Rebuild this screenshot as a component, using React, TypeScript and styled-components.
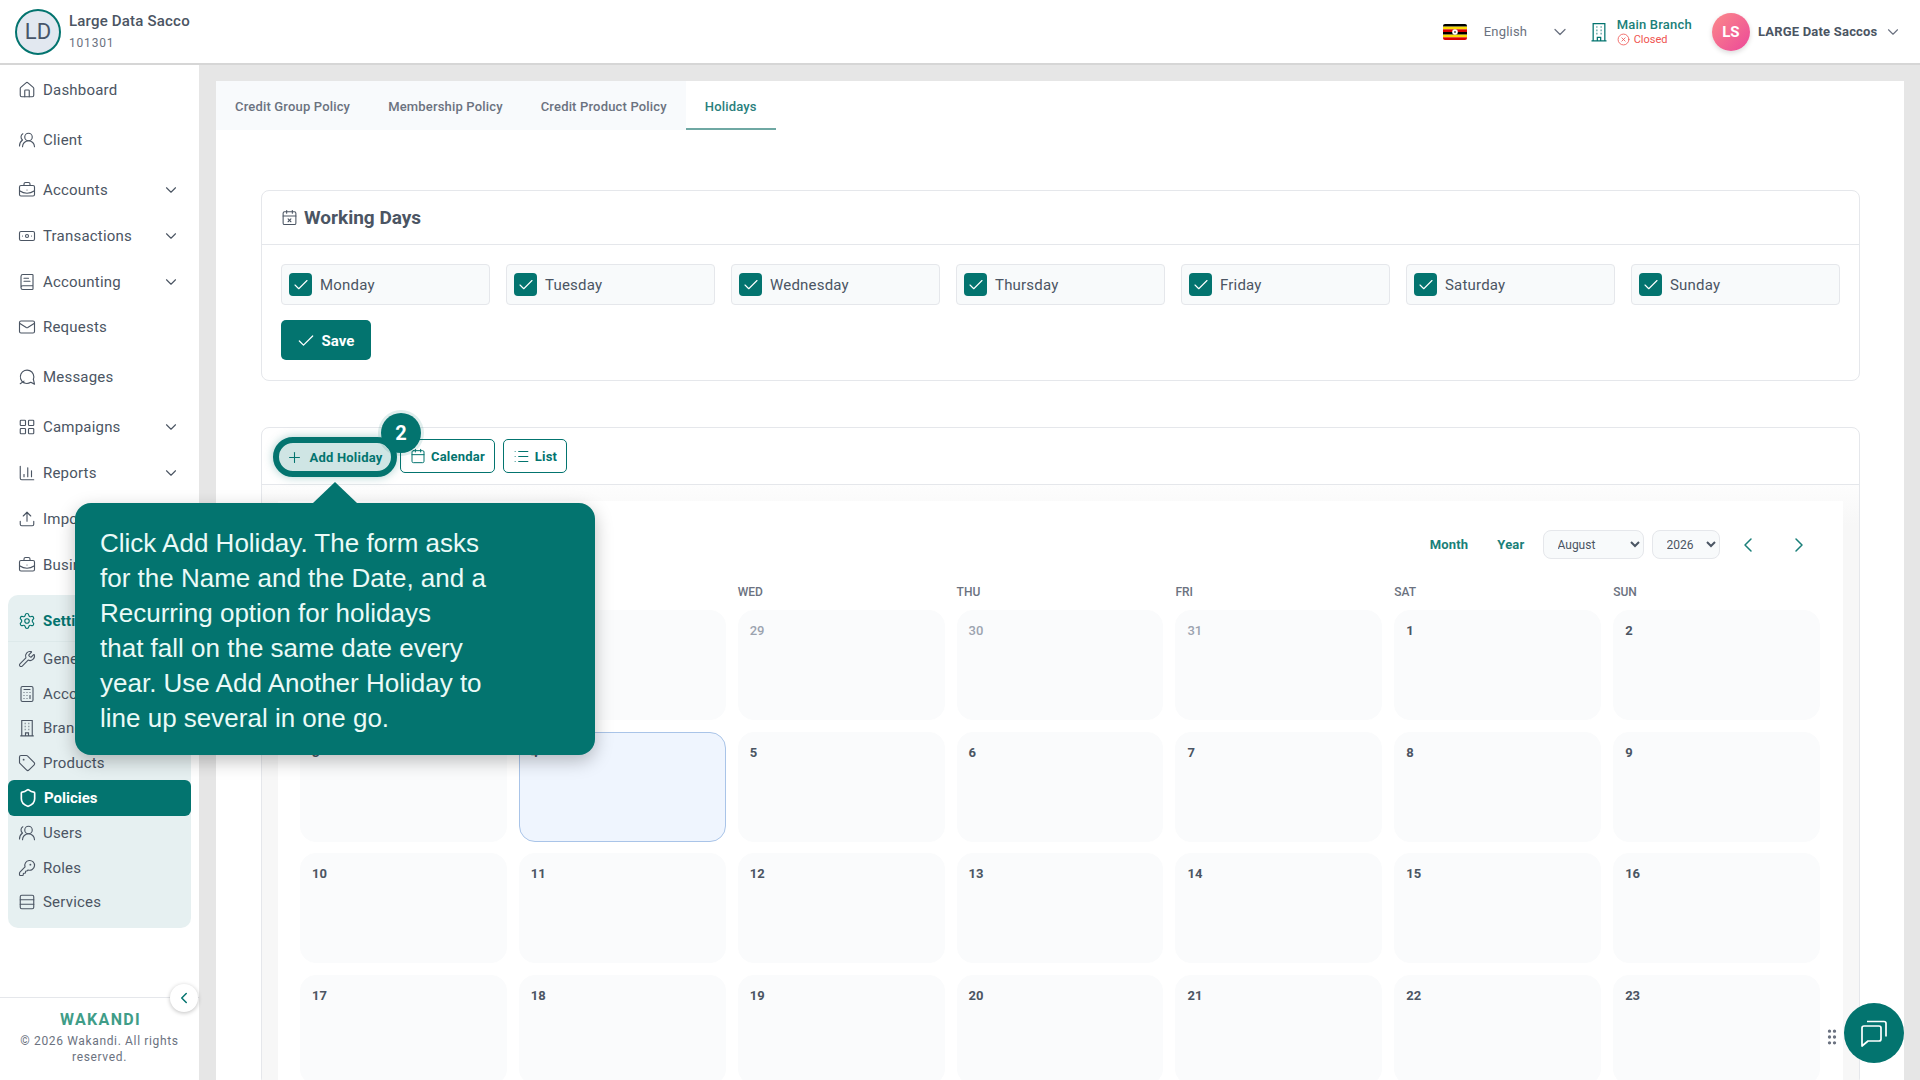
import React from "react";
import styled, { createGlobalStyle } from "styled-components";
import {
    BriefcaseBusiness,
    Banknote,
    BookText,
    Calculator,
    Calendar,
    CalendarX,
    Check,
    ChartColumn,
    ChevronDown,
    ChevronLeft,
    ChevronRight,
    CircleX,
    GripVertical,
    House,
    KeyRound,
    LayoutGrid,
    List,
    Mail,
    Plus,
    Rows3,
    Settings,
    Shield,
    Tag,
    Upload,
    UsersRound,
    Wrench,
} from "lucide-react";

const teal = "#03746f";

const GlobalStyle = createGlobalStyle`
    html, body {
        margin: 0;
        padding: 0;
        height: 100%;
        overflow: hidden;
        background: #fff;
        font-family: Roboto, "Liberation Sans", sans-serif;
    }
    * {
        box-sizing: border-box;
    }
`;

const Page = styled.div`
    width: 1920px;
    height: 1080px;
    display: flex;
    flex-direction: column;
    overflow: hidden;
    position: relative;
`;

const Header = styled.header`
    height: 65px;
    flex: none;
    display: flex;
    align-items: center;
    justify-content: space-between;
    padding: 0 18.5px 0 15px;
    background: #fff;
    border-bottom: 2px solid #d6d6d6;
`;
const Org = styled.div`
    display: flex;
    align-items: center;
    gap: 8px;
`;
const OrgAvatar = styled.div`
    width: 46px;
    height: 46px;
    border-radius: 50%;
    border: 2px solid ${teal};
    background: #e2e8f0;
    color: #475569;
    font-size: 22px;
    display: flex;
    align-items: center;
    justify-content: center;
`;
const OrgName = styled.div`
    font-size: 15px;
    font-weight: 500;
    letter-spacing: 0.2px;
    color: #4b5563;
    line-height: 18px;
`;
const OrgCode = styled.div`
    font-size: 12px;
    color: #6b7280;
    letter-spacing: 0.8px;
    line-height: 16px;
    margin-top: 5px;
`;
const HeaderRight = styled.div`
    display: flex;
    align-items: center;
`;
const Flag = styled.svg`
    width: 24px;
    height: 16px;
    border-radius: 2px;
`;
const Language = styled.span`
    font-size: 13px;
    letter-spacing: 0.2px;
    color: #6b7280;
    margin: 0 23px 0 17px;
`;
const BranchBlock = styled.div`
    display: flex;
    align-items: center;
    gap: 7.5px;
    margin: 0 20px 0 19px;
    color: ${teal};
`;
const BranchName = styled.div`
    font-size: 13px;
    font-weight: 500;
    letter-spacing: 0.2px;
    line-height: 15px;
    color: #1a7f79;
`;
const BranchStatus = styled.div`
    display: flex;
    align-items: center;
    gap: 4px;
    margin-top: 1px;
    font-size: 11px;
    line-height: 14px;
    color: #ef5350;
`;
const UserAvatar = styled.div`
    width: 38px;
    height: 38px;
    border-radius: 50%;
    background: linear-gradient(135deg, #fb8a8a, #ec4899);
    color: #fff;
    font-size: 15px;
    font-weight: 700;
    display: flex;
    align-items: center;
    justify-content: center;
    box-shadow: 0 2px 5px rgba(0, 0, 0, 0.15);
`;
const UserName = styled.span`
    font-size: 13px;
    font-weight: 700;
    letter-spacing: 0.2px;
    color: #4b5563;
    margin: 0 6px 0 8px;
`;

const Body = styled.div`
    flex: 1;
    display: flex;
    min-height: 0;
`;

const Sidebar = styled.aside`
    width: 199px;
    flex: none;
    display: flex;
    flex-direction: column;
    background: #fff;
    padding-top: 2px;
    position: relative;
`;
const NavItem = styled.div<{ $gap?: number }>`
    height: 45.9px;
    flex: none;
    margin-bottom: ${(p) => p.$gap ?? 0}px;
    padding: 0 19px 0 18px;
    display: flex;
    align-items: center;
    gap: 7px;
    font-size: 15px;
    letter-spacing: 0.2px;
    color: #4b5563;
    svg {
        flex: none;
    }
`;
const NavLabel = styled.span`
    flex: 1;
`;
const SettingsGroup = styled.div`
    margin: 7.5px 8px 0;
    height: 333px;
    flex: none;
    background: #e6f0f1;
    border-radius: 10px;
    padding-top: 6px;
`;
const GroupTitle = styled.div`
    height: 40.5px;
    padding: 0 10px;
    display: flex;
    align-items: center;
    gap: 7px;
    font-size: 15px;
    font-weight: 700;
    letter-spacing: 0.2px;
    color: ${teal};
    border-bottom: 1px solid #dde9ea;
`;
const SubItem = styled.div`
    height: 34.5px;
    padding: 0 10px;
    display: flex;
    align-items: center;
    gap: 7px;
    font-size: 15px;
    letter-spacing: 0.2px;
    color: #4b5563;
`;
const ActiveItem = styled.div`
    height: 36px;
    padding: 0 10px;
    display: flex;
    align-items: center;
    gap: 6px;
    border-radius: 6px;
    background: ${teal};
    color: #fff;
    font-size: 15px;
    font-weight: 700;
`;
const SideFooter = styled.div`
    margin-top: auto;
    height: 83px;
    border-top: 1px solid #e5e7eb;
    padding-top: 13px;
    text-align: center;
    position: relative;
`;
const Logo = styled.div`
    font-size: 16px;
    line-height: 18px;
    font-weight: 700;
    letter-spacing: 1.3px;
    padding-left: 2px;
    color: #3f9d88;
`;
const Copyright = styled.div`
    font-size: 12px;
    line-height: 16px;
    color: #6b7280;
    letter-spacing: 0.65px;
    margin-top: 4px;
    padding: 0 14px;
`;
const CollapseButton = styled.div`
    position: absolute;
    top: -14px;
    right: 1px;
    width: 28px;
    height: 28px;
    border-radius: 50%;
    background: #fff;
    box-shadow: 0 1px 4px rgba(0, 0, 0, 0.25);
    color: ${teal};
    display: flex;
    align-items: center;
    justify-content: center;
`;

const Main = styled.main`
    flex: 1;
    min-width: 0;
    background: #e6e6e6;
    padding: 16px 16px 0 17px;
`;
const Panel = styled.div`
    height: 100%;
    background: #fff;
    overflow: hidden;
`;
const Tabs = styled.nav`
    height: 49px;
    display: flex;
`;
const Tab = styled.div<{ $active?: boolean }>`
    padding: 4px 19px 0;
    display: flex;
    align-items: center;
    font-size: 13px;
    font-weight: 500;
    letter-spacing: 0.17px;
    color: ${(p) => (p.$active ? "#2a7f7d" : "#6b7280")};
    background: ${(p) => (p.$active ? "#fff" : "#f8fafc")};
    border-bottom: 2px solid ${(p) => (p.$active ? "#6fa8a3" : "transparent")};
`;
const Content = styled.div`
    padding: 60px 44px 0 45px;
`;
const Card = styled.section`
    border: 1px solid #e5e7eb;
    border-radius: 8px;
    background: #fff;
`;
const WorkingCard = styled(Card)`
    height: 191px;
    margin-bottom: 46px;
`;
const CardHeader = styled.div`
    height: 54px;
    padding: 0 15px 1px 19px;
    display: flex;
    align-items: center;
    gap: 6px;
    border-bottom: 1px solid #e5e7eb;
    color: #4b5563;
`;
const CardTitle = styled.h2`
    margin: 0;
    font-size: 19px;
    font-weight: 700;
    color: #4b5563;
`;
const CardBody = styled.div`
    padding: 19px 19px 0;
`;
const DayGrid = styled.div`
    display: grid;
    grid-template-columns: repeat(7, 1fr);
    gap: 16px;
`;
const DayChip = styled.label`
    height: 41px;
    padding: 0 7px;
    display: flex;
    align-items: center;
    gap: 8px;
    background: #f8fafb;
    border: 1px solid #e5e7eb;
    border-radius: 4px;
    font-size: 15px;
    letter-spacing: 0.2px;
    color: #4b5563;
`;
const CheckBox = styled.span`
    width: 23px;
    height: 23px;
    border-radius: 4px;
    background: ${teal};
    color: #fff;
    display: flex;
    align-items: center;
    justify-content: center;
`;
const SaveButton = styled.button`
    margin-top: 15px;
    width: 90px;
    height: 40px;
    border: none;
    border-radius: 5px;
    background: ${teal};
    color: #fff;
    font-family: inherit;
    font-size: 15px;
    font-weight: 700;
    display: flex;
    align-items: center;
    justify-content: center;
    gap: 6px;
    padding: 2px 2px 0 0;
`;

const Toolbar = styled.div`
    height: 57px;
    padding: 0 0 0 11px;
    display: flex;
    align-items: center;
    border-bottom: 1px solid #e5e7eb;
`;
const OutlineButton = styled.button`
    height: 34px;
    padding: 0 9px;
    margin-right: 8px;
    border: 1px solid ${teal};
    border-radius: 5px;
    background: #fff;
    color: ${teal};
    font-family: inherit;
    font-size: 13px;
    font-weight: 700;
    letter-spacing: 0.2px;
    display: flex;
    align-items: center;
    gap: 5px;
`;
const HighlightedButton = styled.button`
    position: relative;
    width: 124px;
    height: 40px;
    margin: 2px 3px 0 0;
    border: 6px solid ${teal};
    border-radius: 20px;
    background: #cfe5e4;
    color: ${teal};
    font-family: inherit;
    font-size: 13px;
    font-weight: 700;
    letter-spacing: 0.2px;
    display: flex;
    align-items: center;
    justify-content: center;
    gap: 7px;
    padding: 0 2px 0 0;
    box-shadow: 0 0 10px rgba(3, 116, 111, 0.35);
`;
const StepBadge = styled.span`
    position: absolute;
    top: -30px;
    right: -30px;
    width: 40px;
    height: 40px;
    border-radius: 50%;
    background: ${teal};
    color: #fff;
    font-size: 20px;
    font-weight: 700;
    display: flex;
    align-items: center;
    justify-content: center;
    box-shadow: 0 0 0 3px rgba(3, 116, 111, 0.12);
`;

const CalendarWrap = styled.div`
    background: linear-gradient(#fdfdfd 0, #f7f7f7 40px);
    padding: 16px 16px 0;
`;
const CalendarInner = styled.div`
    background: #fff;
    padding: 0 23px 0 22px;
`;
const CalendarHead = styled.div`
    height: 83px;
    padding-top: 4px;
    display: flex;
    align-items: center;
    justify-content: space-between;
`;
const MonthTitle = styled.h3`
    margin: 0;
    font-size: 18px;
    font-weight: 700;
    color: #374151;
`;
const Controls = styled.div`
    display: flex;
    align-items: center;
    color: #1a7f79;
`;
const ViewLink = styled.span`
    font-size: 13px;
    font-weight: 700;
    letter-spacing: 0.2px;
    color: #1a7f79;
    margin-right: 29px;
    &:nth-of-type(2) {
        margin-right: 10px;
    }
`;
const Picker = styled.select<{ $width: number }>`
    width: ${(p) => p.$width}px;
    height: 29px;
    margin-left: 8px;
    border: 1px solid #e5e7eb;
    border-radius: 8px;
    background: #f8fafb;
    color: #4b5563;
    font-family: inherit;
    font-size: 12px;
    padding: 0 8px 0 10px;
`;
const NavArrows = styled.div`
    display: flex;
    gap: 27px;
    margin: 0 9px 0 16.5px;
`;
const Weekdays = styled.div`
    display: grid;
    grid-template-columns: repeat(7, 1fr);
    gap: 12px;
    height: 26px;
`;
const Weekday = styled.div`
    font-size: 12px;
    font-weight: 500;
    color: #6b7280;
    line-height: 14px;
    margin-top: 1px;
`;
const DayCells = styled.div`
    display: grid;
    grid-template-columns: repeat(7, 1fr);
    grid-auto-rows: 110px;
    gap: 11.5px 12px;
`;
const DayCell = styled.div<{ $today?: boolean; $muted?: boolean }>`
    padding: 13px 11px;
    border-radius: 16px;
    background: ${(p) => (p.$today ? "#eff5fe" : "#fafbfc")};
    border: 1px solid ${(p) => (p.$today ? "#a9c4e8" : "#fafbfc")};
    font-size: 13px;
    line-height: 14px;
    font-weight: ${(p) => (p.$muted ? 500 : 700)};
    color: ${(p) => (p.$muted ? "#9ca3af" : "#4b5563")};
`;

const Tooltip = styled.div`
    position: absolute;
    left: 75px;
    top: 503px;
    width: 520px;
    height: 252px;
    padding: 23px 25px;
    border-radius: 16px;
    background: ${teal};
    color: #eafaf7;
    font-family: "Liberation Sans", Arial, sans-serif;
    font-size: 26px;
    line-height: 35px;
    box-shadow: 0 6px 18px rgba(0, 0, 0, 0.25);
    &::before {
        content: "";
        position: absolute;
        left: 238px;
        top: -21px;
        border-left: 22px solid transparent;
        border-right: 22px solid transparent;
        border-bottom: 21px solid ${teal};
    }
`;
const TooltipLine = styled.div`
    white-space: nowrap;
`;

const ChatButton = styled.div`
    position: absolute;
    left: 1844px;
    top: 1003px;
    width: 60px;
    height: 60px;
    border-radius: 50%;
    background: ${teal};
    color: #fff;
    display: flex;
    align-items: center;
    justify-content: center;
`;
const ChatGrip = styled.div`
    position: absolute;
    left: 1822px;
    top: 1027px;
    color: #6b7280;
`;
const MirroredUsers = styled(UsersRound)`
    transform: scaleX(-1);
`;

const BuildingIcon: React.FC<{ size: number }> = ({ size }) => (
    <svg width={size} height={size} viewBox="0 0 24 24" fill="none" stroke="currentColor" strokeWidth={1.5}>
        <path d="M5 22.5V2h14v20.5M3 22.5h18M10 22.5v-4h4v4" />
        <path d="M9 6h1M14 6h1M9 10h1M14 10h1M9 14h1M14 14h1" strokeWidth={2} />
    </svg>
);
const MessagesIcon: React.FC<{ size: number }> = ({ size }) => (
    <svg width={size} height={size} viewBox="0 0 24 24" fill="none" stroke="currentColor" strokeWidth={1.5}>
        <path d="M20.5 15A9 9 0 1 0 8 19.8" strokeLinecap="round" />
        <path d="M8 17.5 3 21M8 19.8c3 1.2 6.500 .8 9-.8l5 2.500-1.500-6.500" strokeLinecap="round" strokeLinejoin="round" />
    </svg>
);
const ChatIcon: React.FC = () => (
    <svg width={32} height={32} viewBox="0 0 32 32" fill="none" stroke="currentColor" strokeWidth={1.7} strokeLinejoin="round">
        <path d="M4 11a2 2 0 0 1 2-2h15a2 2 0 0 1 2 2v11a2 2 0 0 1-2 2H10l-6 5z" />
        <path d="M9 4.500h17a2 2 0 0 1 2 2v13" />
    </svg>
);

const navTop = [
    { label: "Dashboard", Icon: House, gap: 4 },
    { label: "Client", Icon: MirroredUsers, gap: 4 },
    { label: "Accounts", Icon: BriefcaseBusiness, more: true },
    { label: "Transactions", Icon: Banknote, more: true },
    { label: "Accounting", Icon: BookText, more: true },
    { label: "Requests", Icon: Mail, gap: 4 },
    { label: "Messages", Icon: MessagesIcon, gap: 4 },
    { label: "Campaigns", Icon: LayoutGrid, more: true },
    { label: "Reports", Icon: ChartColumn, more: true },
    { label: "Import", Icon: Upload },
    { label: "Business", Icon: BriefcaseBusiness },
];
const subTop = [
    { label: "General", Icon: Wrench },
    { label: "Accounts", Icon: Calculator },
    { label: "Branches", Icon: BuildingIcon },
    { label: "Products", Icon: Tag },
];
const subBottom = [
    { label: "Users", Icon: MirroredUsers },
    { label: "Roles", Icon: KeyRound },
    { label: "Services", Icon: Rows3 },
];
const tabs = ["Credit Group Policy", "Membership Policy", "Credit Product Policy", "Holidays"];
const days = ["Monday", "Tuesday", "Wednesday", "Thursday", "Friday", "Saturday", "Sunday"];
const weekdays = ["MON", "TUE", "WED", "THU", "FRI", "SAT", "SUN"];
const cells = [
    27, 28, 29, 30, 31, 1, 2, 3, 4, 5, 6, 7, 8, 9, 10, 11, 12, 13, 14, 15, 16, 17, 18, 19, 20, 21, 22,
    23,
];
const tooltipLines = [
    "Click Add Holiday. The form asks",
    "for the Name and the Date, and a",
    "Recurring option for holidays",
    "that fall on the same date every",
    "year. Use Add Another Holiday to",
    "line up several in one go.",
];

const App: React.FC = () => {
    return (
        <Page>
            <GlobalStyle />
            <Header>
                <Org>
                    <OrgAvatar>LD</OrgAvatar>
                    <div>
                        <OrgName>Large Data Sacco</OrgName>
                        <OrgCode>101301</OrgCode>
                    </div>
                </Org>
                <HeaderRight>
                    <Flag viewBox="0 0 24 16">
                        <rect width="24" height="2.67" y="0" fill="#000" />
                        <rect width="24" height="2.67" y="2.67" fill="#fcdc04" />
                        <rect width="24" height="2.67" y="5.33" fill="#d90000" />
                        <rect width="24" height="2.67" y="8" fill="#000" />
                        <rect width="24" height="2.67" y="10.67" fill="#fcdc04" />
                        <rect width="24" height="2.67" y="13.33" fill="#d90000" />
                        <circle cx="12" cy="8" r="2.8" fill="#fff" />
                        <circle cx="12" cy="8" r="1" fill="#555" />
                    </Flag>
                    <Language>English</Language>
                    <ChevronDown size={20} color="#6b7280" strokeWidth={1.5} />
                    <BranchBlock>
                        <BuildingIcon size={20} />
                        <div>
                            <BranchName>Main Branch</BranchName>
                            <BranchStatus>
                                <CircleX size={13} strokeWidth={1.5} />
                                Closed
                            </BranchStatus>
                        </div>
                    </BranchBlock>
                    <UserAvatar>LS</UserAvatar>
                    <UserName>LARGE Date Saccos</UserName>
                    <ChevronDown size={18} color="#6b7280" strokeWidth={1.5} />
                </HeaderRight>
            </Header>
            <Body>
                <Sidebar>
                    {navTop.map(({ label, Icon, gap, more }) => (
                        <NavItem key={label} $gap={gap}>
                            <Icon size={18} strokeWidth={1.5} />
                            <NavLabel>{label}</NavLabel>
                            {more && <ChevronDown size={18} strokeWidth={1.5} />}
                        </NavItem>
                    ))}
                    <SettingsGroup>
                        <GroupTitle>
                            <Settings size={18} strokeWidth={1.5} />
                            Settings
                        </GroupTitle>
                        {subTop.map(({ label, Icon }) => (
                            <SubItem key={label}>
                                <Icon size={18} strokeWidth={1.5} />
                                {label}
                            </SubItem>
                        ))}
                        <ActiveItem>
                            <Shield size={20} strokeWidth={2} />
                            Policies
                        </ActiveItem>
                        {subBottom.map(({ label, Icon }) => (
                            <SubItem key={label}>
                                <Icon size={18} strokeWidth={1.5} />
                                {label}
                            </SubItem>
                        ))}
                    </SettingsGroup>
                    <SideFooter>
                        <CollapseButton>
                            <ChevronLeft size={18} />
                        </CollapseButton>
                        <Logo>WAKANDI</Logo>
                        <Copyright>© 2026 Wakandi. All rights reserved.</Copyright>
                    </SideFooter>
                </Sidebar>
                <Main>
                    <Panel>
                        <Tabs>
                            {tabs.map((t) => (
                                <Tab key={t} $active={t === "Holidays"}>
                                    {t}
                                </Tab>
                            ))}
                        </Tabs>
                        <Content>
                            <WorkingCard>
                                <CardHeader>
                                    <CalendarX size={17} strokeWidth={1.5} />
                                    <CardTitle>Working Days</CardTitle>
                                </CardHeader>
                                <CardBody>
                                    <DayGrid>
                                        {days.map((d) => (
                                            <DayChip key={d}>
                                                <CheckBox>
                                                    <Check size={18} strokeWidth={1.5} />
                                                </CheckBox>
                                                {d}
                                            </DayChip>
                                        ))}
                                    </DayGrid>
                                    <SaveButton>
                                        <Check size={20} strokeWidth={1.5} />
                                        Save
                                    </SaveButton>
                                </CardBody>
                            </WorkingCard>
                            <Card>
                                <Toolbar>
                                    <HighlightedButton>
                                        <Plus size={17} strokeWidth={1.5} />
                                        Add Holiday
                                        <StepBadge>2</StepBadge>
                                    </HighlightedButton>
                                    <OutlineButton>
                                        <Calendar size={16} strokeWidth={1.5} />
                                        Calendar
                                    </OutlineButton>
                                    <OutlineButton>
                                        <List size={17} strokeWidth={1.5} />
                                        List
                                    </OutlineButton>
                                </Toolbar>
                                <CalendarWrap>
                                    <CalendarInner>
                                        <CalendarHead>
                                            <MonthTitle>August 2026</MonthTitle>
                                            <Controls>
                                                <ViewLink>Month</ViewLink>
                                                <ViewLink>Year</ViewLink>
                                                <Picker defaultValue="August" $width={101}>
                                                    <option>August</option>
                                                </Picker>
                                                <Picker defaultValue="2026" $width={68}>
                                                    <option>2026</option>
                                                </Picker>
                                                <NavArrows>
                                                    <ChevronLeft size={24} strokeWidth={1.5} />
                                                    <ChevronRight size={24} strokeWidth={1.5} />
                                                </NavArrows>
                                            </Controls>
                                        </CalendarHead>
                                        <Weekdays>
                                            {weekdays.map((w) => (
                                                <Weekday key={w}>{w}</Weekday>
                                            ))}
                                        </Weekdays>
                                        <DayCells>
                                            {cells.map((n, i) => (
                                                <DayCell key={i} $muted={i < 5} $today={n === 4}>
                                                    {n}
                                                </DayCell>
                                            ))}
                                        </DayCells>
                                    </CalendarInner>
                                </CalendarWrap>
                            </Card>
                        </Content>
                    </Panel>
                </Main>
            </Body>
            <Tooltip>
                {tooltipLines.map((l) => (
                    <TooltipLine key={l}>{l}</TooltipLine>
                ))}
            </Tooltip>
            <ChatGrip>
                <GripVertical size={20} strokeWidth={2} />
            </ChatGrip>
            <ChatButton>
                <ChatIcon />
            </ChatButton>
        </Page>
    );
};

export default App;
